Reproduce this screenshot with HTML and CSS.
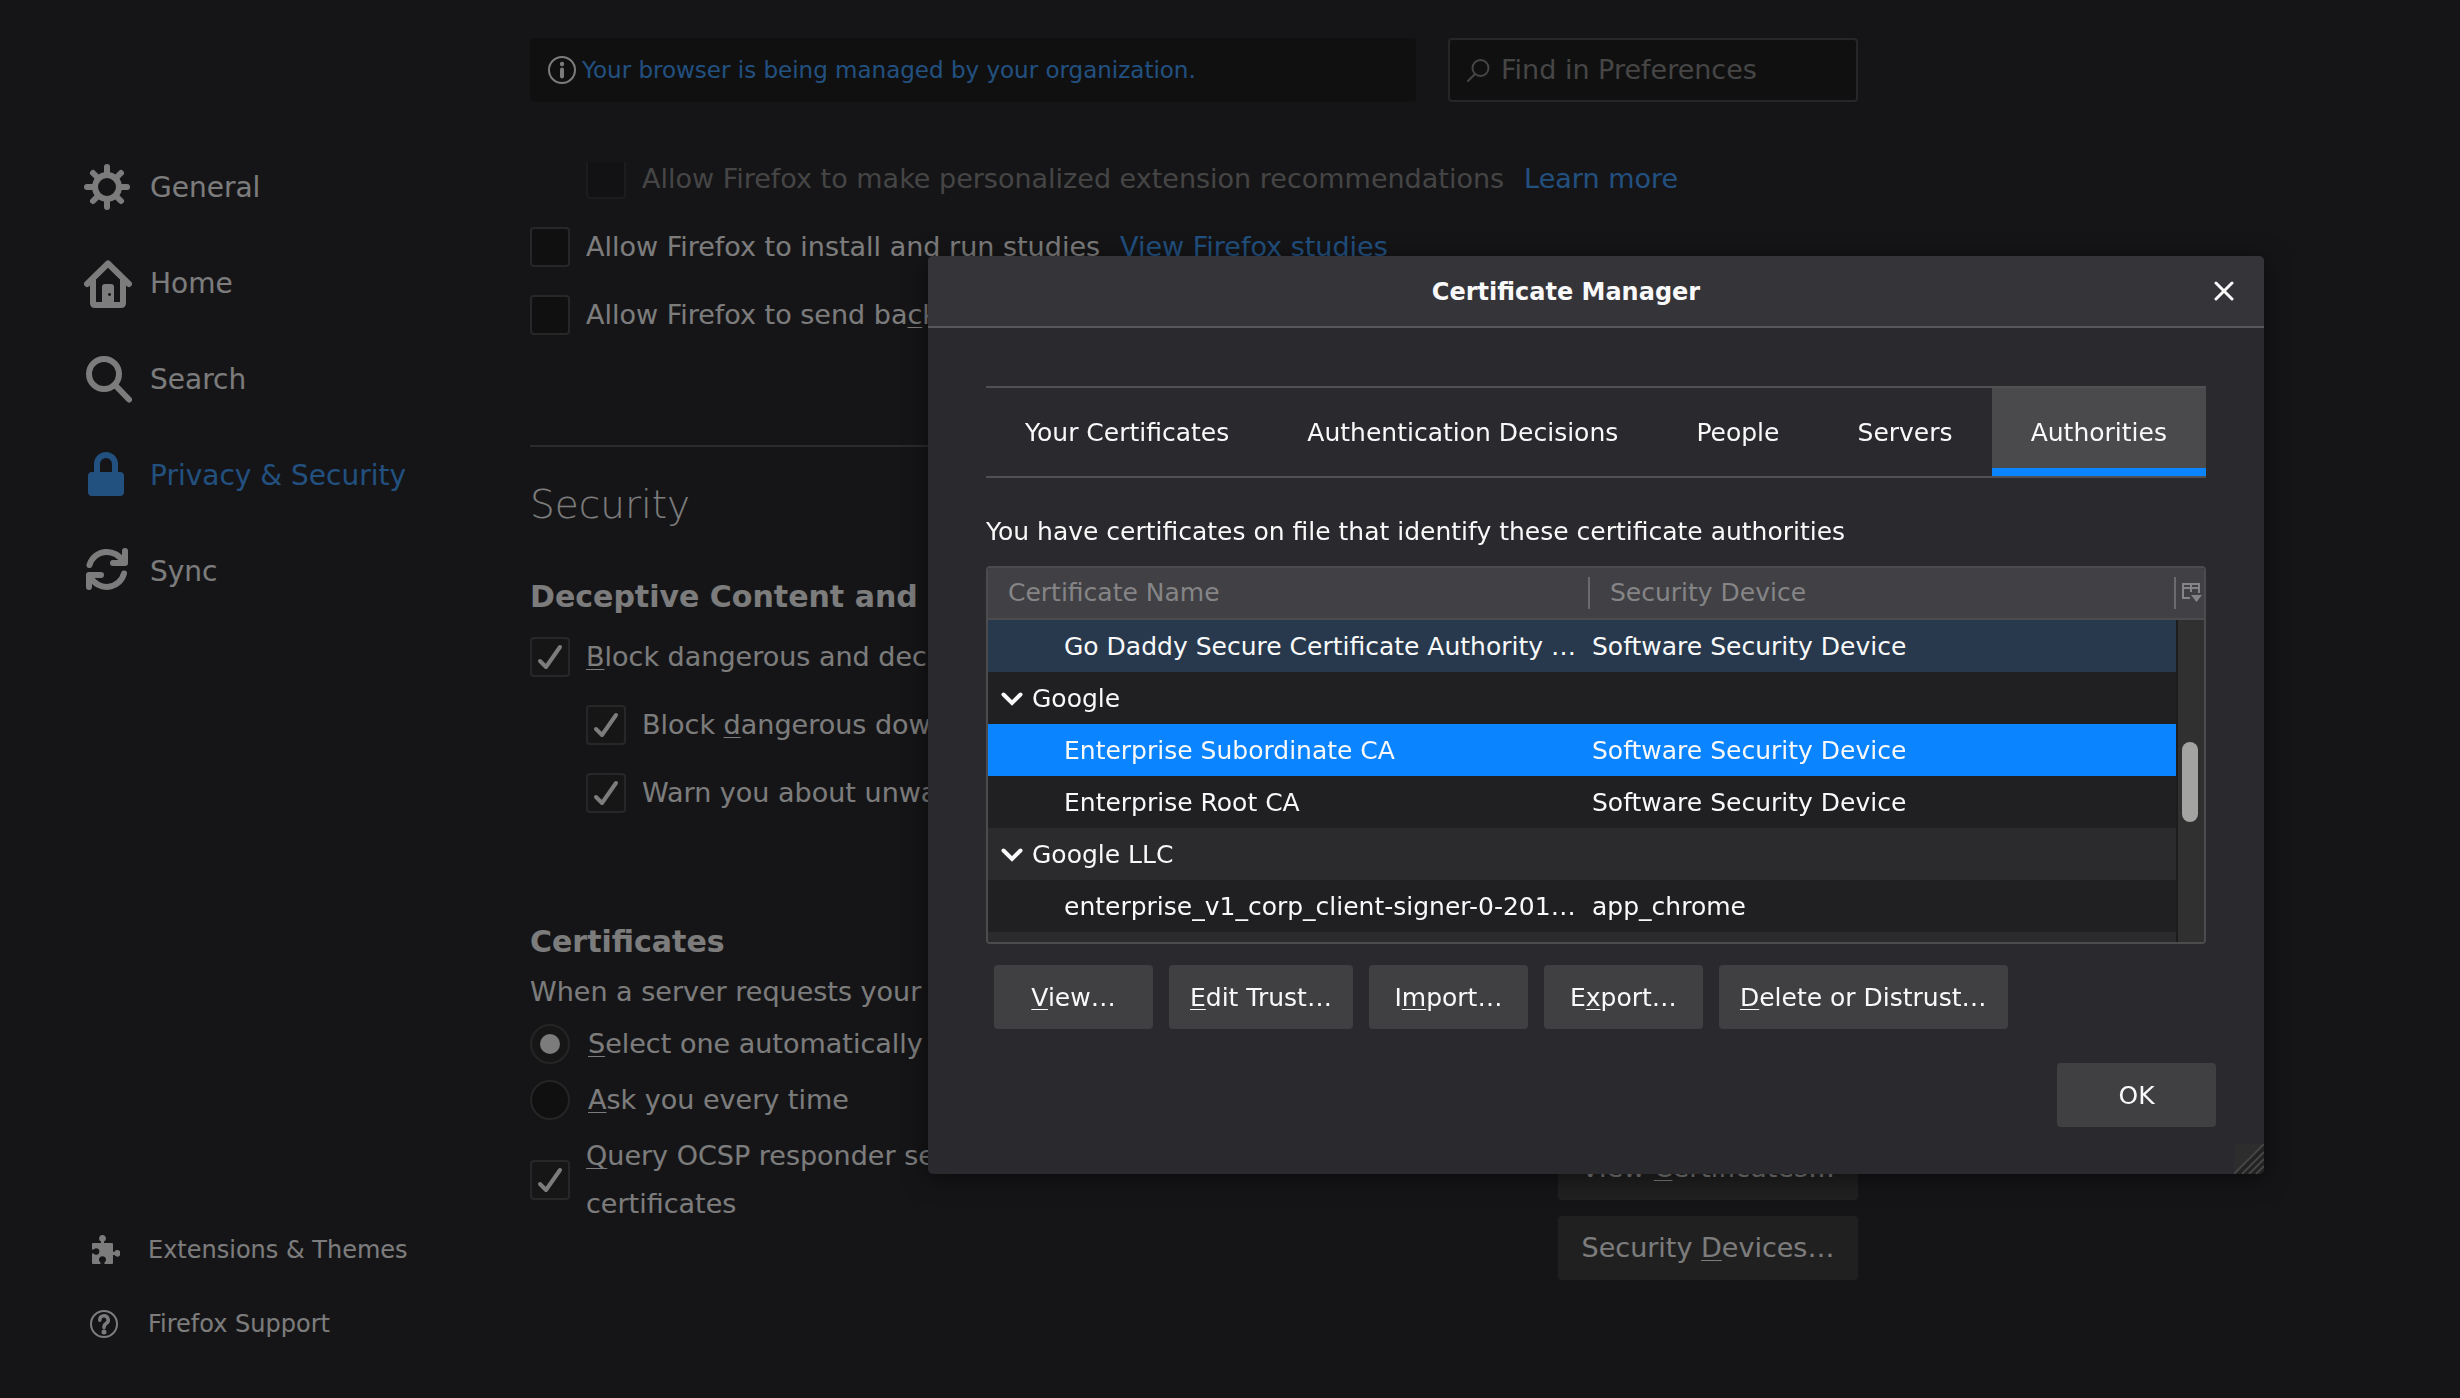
FILE: index.html
```html
<!DOCTYPE html>
<html lang="en">
<head>
<meta charset="utf-8">
<title>Preferences</title>
<link rel="stylesheet" href="styles.css">
</head>
<body>
<div class="page">
  <aside class="sidebar">
    <nav class="categories">
      <a class="category" href="#general">
        <svg class="category-icon" viewBox="0 0 48 48" fill="none" stroke="currentColor" stroke-width="6" stroke-linecap="round"><circle cx="23" cy="23" r="12"/><path d="M23 10V3M23 36v7M10 23H3M36 23h7M14 14L9 9M32 14l5-5M14 32l-5 5M32 32l5 5"/></svg>
        General</a>
      <a class="category" href="#home">
        <svg class="category-icon" viewBox="0 0 48 48" fill="none" stroke="currentColor" stroke-width="6" stroke-linecap="round" stroke-linejoin="round"><path d="M3 24L24 3.500 45 24"/><path d="M9 20v23q0 2 2 2h26q2 0 2-2V20" /><path fill="currentColor" stroke="none" fill-rule="evenodd" d="M21 24h6q3 0 3 3v18H18V27q0-3 3-3zm4.500 9a1.500 1.500 0 1 0 .01 0z"/></svg>
        Home</a>
      <a class="category" href="#search">
        <svg class="category-icon" viewBox="0 0 48 48" fill="none" stroke="currentColor" stroke-width="6" stroke-linecap="round"><circle cx="20" cy="18" r="15"/><path d="M31 29l14 14.500"/></svg>
        Search</a>
      <a class="category category-selected" href="#privacy">
        <svg class="category-icon" viewBox="0 0 48 48" fill="none" stroke="currentColor" stroke-width="6"><path d="M13 22V12a9 9 0 0 1 18 0v10"/><rect x="4" y="20" width="36" height="24" rx="4" fill="currentColor" stroke="none"/></svg>
        Privacy &amp; Security</a>
      <a class="category" href="#sync">
        <svg class="category-icon" viewBox="0 0 48 48" fill="none" stroke="currentColor" stroke-width="6" stroke-linecap="round" stroke-linejoin="round"><path d="M5.500 17A18 18 0 0 1 39 14M40 25.500A18 18 0 0 1 6.500 29M41 3v12H29M5 39V27h12"/></svg>
        Sync</a>
    </nav>
    <nav class="side-links">
      <a class="side-link" href="#addons">
        <svg class="side-icon" viewBox="-4 -2 32 32" fill="currentColor"><path d="M1 7h8V5.500a3.400 3.400 0 1 1 3 0V7h8q1 0 1 1v7.700h1.500a3.300 3.300 0 1 1 0 3.300H21v8q0 1-1 1h-7.500v-1.500a3.500 3.500 0 1 0-4 0V28H1q-1 0-1-1v-9.500h1.500a3.300 3.300 0 1 0 0-4H0V8q0-1 1-1z"/></svg>
        Extensions &amp; Themes</a>
      <a class="side-link" href="#support">
        <svg class="side-icon" viewBox="-2 -2 32 32" fill="none" stroke="currentColor" stroke-width="2"><circle cx="14" cy="14" r="13"/><path stroke-width="3.500" stroke-linecap="round" d="M9.800 10.200a4.200 4.200 0 1 1 6.400 3.300C14.500 14.600 14 15.300 14 17.500"/><circle cx="14" cy="22" r="2.500" fill="currentColor" stroke="none"/></svg>
        Firefox Support</a>
    </nav>
  </aside>

  <main class="content">
    <header class="top-bar">
      <p class="notice">
        <svg class="notice-icon" viewBox="0 0 28 28" fill="currentColor"><circle cx="14" cy="14" r="13" fill="none" stroke="currentColor" stroke-width="2"/><circle cx="14" cy="8" r="2.200"/><rect x="12" y="11.500" width="4" height="11" rx="2"/></svg>
        <a class="link" href="#policies">Your browser is being managed by your organization.</a>
      </p>
      <label class="finder">
        <svg class="finder-icon" viewBox="0 0 24 24" fill="none" stroke="currentColor" stroke-width="2" stroke-linecap="round"><circle cx="14.500" cy="10" r="8"/><path d="M9 16l-7 7"/></svg>
        <input class="finder-input" type="search" placeholder="Find in Preferences" aria-label="Find in Preferences">
      </label>
    </header>

    <div class="pane">
      <div class="option-list option-list-top">
        <div class="option option-nested option-disabled">
          <span class="tick"><input class="tick-box" type="checkbox" id="recommend" disabled></span>
          <label for="recommend">Allow Firefox to make personalized extension recommendations</label>
          <a class="link option-link" href="#learn">Learn more</a>
        </div>
        <div class="option">
          <span class="tick"><input class="tick-box" type="checkbox" id="studies"></span>
          <label for="studies">Allow Firefox to install and run studies</label>
          <a class="link option-link" href="#studies-list">View Firefox studies</a>
        </div>
        <div class="option">
          <span class="tick"><input class="tick-box" type="checkbox" id="crash"></span>
          <label for="crash">Allow Firefox to send ba<u>c</u>klogged crash reports on your behalf</label>
        </div>
      </div>

      <hr class="divider">
      <h1 class="title">Security</h1>

      <section>
        <h2 class="heading">Deceptive Content and Dangerous Software Protection</h2>
        <div class="option-list">
          <div class="option">
            <span class="tick"><input class="tick-box" type="checkbox" id="block" checked><svg class="tick-mark" viewBox="0 0 40 40"><path d="M10 24l6 6L30 10"/></svg></span>
            <label for="block"><u>B</u>lock dangerous and deceptive content</label>
          </div>
          <div class="option option-nested">
            <span class="tick"><input class="tick-box" type="checkbox" id="downloads" checked><svg class="tick-mark" viewBox="0 0 40 40"><path d="M10 24l6 6L30 10"/></svg></span>
            <label for="downloads">Block <u>d</u>angerous downloads</label>
          </div>
          <div class="option option-nested">
            <span class="tick"><input class="tick-box" type="checkbox" id="unwanted" checked><svg class="tick-mark" viewBox="0 0 40 40"><path d="M10 24l6 6L30 10"/></svg></span>
            <label for="unwanted">Warn you about unwanted and uncommon software</label>
          </div>
        </div>
      </section>

      <section class="certificates">
        <h2 class="heading">Certificates</h2>
        <p class="text">When a server requests your personal certificate</p>
        <div class="radio-list">
          <div class="option">
            <input class="radio" type="radio" name="ask" id="auto" checked>
            <label for="auto"><u>S</u>elect one automatically</label>
          </div>
          <div class="option">
            <input class="radio" type="radio" name="ask" id="ask">
            <label for="ask"><u>A</u>sk you every time</label>
          </div>
        </div>
        <div class="ocsp">
          <div class="option option-tall">
            <span class="tick"><input class="tick-box" type="checkbox" id="ocsp" checked><svg class="tick-mark" viewBox="0 0 40 40"><path d="M10 24l6 6L30 10"/></svg></span>
            <label for="ocsp"><u>Q</u>uery OCSP responder servers to confirm the current validity of certificates</label>
          </div>
          <div class="ocsp-buttons">
            <button class="button button-page" type="button">View <u>C</u>ertificates…</button>
            <button class="button button-page" type="button">Security <u>D</u>evices…</button>
          </div>
        </div>
      </section>
    </div>
  </main>
</div>

<div class="backdrop"></div>

<div class="dialog" role="dialog" aria-labelledby="dialog-title">
  <header class="dialog-head">
    <h2 class="dialog-title" id="dialog-title">Certificate Manager</h2>
    <button class="close" type="button" aria-label="Close"><svg class="close-icon" viewBox="0 0 20 20"><path d="M2 2l16 16M18 2L2 18"/></svg></button>
  </header>
  <div class="dialog-body">
    <div class="tabs" role="tablist">
      <button class="tab" type="button" role="tab">Your Certificates</button>
      <button class="tab" type="button" role="tab">Authentication Decisions</button>
      <button class="tab" type="button" role="tab">People</button>
      <button class="tab" type="button" role="tab">Servers</button>
      <button class="tab tab-selected" type="button" role="tab" aria-selected="true">Authorities</button>
    </div>
    <p class="intro">You have certificates on file that identify these certificate authorities</p>
    <div class="tree">
      <table class="tree-table">
        <colgroup><col class="col-name"><col class="col-device"><col class="col-picker"></colgroup>
        <thead>
          <tr>
            <th><span class="head-cell">Certificate Name</span></th>
            <th><span class="head-cell">Security Device</span></th>
            <th><button class="picker" type="button" aria-label="Select columns to display"><svg class="picker-icon" viewBox="0 0 20 20"><path fill="none" stroke="currentColor" stroke-width="2" d="M8 15H1V1h16v9M1 5h16M9 1v8"/><path fill="currentColor" d="M9 12h11l-5.500 7z"/></svg></button></th>
          </tr>
        </thead>
        <tbody>
          <tr class="row-current"><td class="cell-child">Go Daddy Secure Certificate Authority - G2</td><td>Software Security Device</td><td></td></tr>
          <tr><td class="cell-group"><svg class="twisty" viewBox="0 0 22 16"><path d="M2.500 3.500L11 12l8.500-8.500"/></svg>Google</td><td></td><td></td></tr>
          <tr class="row-selected"><td class="cell-child">Enterprise Subordinate CA</td><td>Software Security Device</td><td></td></tr>
          <tr><td class="cell-child">Enterprise Root CA</td><td>Software Security Device</td><td></td></tr>
          <tr class="row-alt"><td class="cell-group"><svg class="twisty" viewBox="0 0 22 16"><path d="M2.500 3.500L11 12l8.500-8.500"/></svg>Google LLC</td><td></td><td></td></tr>
          <tr><td class="cell-child">enterprise_v1_corp_client-signer-0-2018-07-03</td><td>app_chrome</td><td></td></tr>
          <tr class="row-alt"><td></td><td></td><td></td></tr>
        </tbody>
      </table>
      <div class="scrollbar"><div class="thumb"></div></div>
    </div>
    <div class="actions">
      <button class="button" type="button"><u>V</u>iew…</button>
      <button class="button" type="button"><u>E</u>dit Trust…</button>
      <button class="button" type="button">I<u>m</u>port…</button>
      <button class="button" type="button">E<u>x</u>port…</button>
      <button class="button" type="button"><u>D</u>elete or Distrust…</button>
    </div>
    <div class="confirm"><button class="button" type="button">OK</button></div>
  </div>
  <svg class="resizer" viewBox="0 0 30 30"><path fill="#2d2d2d" d="M0 0h30v30H0z"/><path fill="#222" d="M30 0v30H0z"/><path stroke="#454545" stroke-width="2" d="M0 30L30 0M8 30L30 8M15 30l15-15M22 30l8-8"/></svg>
</div>
</body>
</html>
```
FILE: styles.css
```css
* {
  box-sizing: border-box;
}

body {
  margin: 0;
  background: #2a2a2e;
  color: #f9f9fa;
  font: 27px/36px "DejaVu Sans", sans-serif;
}

h1, h2, p {
  margin: 0;
}

button, input {
  font: inherit;
  color: inherit;
}

u {
  text-decoration-thickness: 1px;
  text-underline-offset: 3px;
}

.link {
  color: #45a1ff;
  text-decoration: none;
}

.page {
  display: grid;
  grid-template-columns: 530px minmax(0, 1328px);
  height: 100vh;
  overflow: hidden;
}

/* Sidebar */

.sidebar {
  display: flex;
  flex-direction: column;
  justify-content: space-between;
  padding: 140px 0 37px 84px;
}

.category,
.side-link {
  display: flex;
  align-items: center;
  color: inherit;
  text-decoration: none;
}

.category {
  height: 96px;
  gap: 18px;
  font-size: 28px;
}

.category-selected {
  color: #45a1ff;
}

.category-icon {
  width: 48px;
  height: 48px;
}

.side-link {
  height: 74px;
  padding-left: 4px;
  gap: 28px;
  font-size: 24px;
}

.side-icon {
  width: 32px;
  height: 32px;
}

/* Top bar */

.content {
  display: flex;
  flex-direction: column;
  padding-top: 38px;
  min-height: 0;
}

.top-bar {
  display: grid;
  grid-template-columns: minmax(0, 1fr) 410px;
  gap: 32px;
  margin-bottom: 60px;
}

.notice {
  display: flex;
  align-items: center;
  gap: 6px;
  height: 64px;
  padding: 0 18px;
  border-radius: 4px;
  background: #202020;
  font-size: 23px;
}

.notice-icon {
  width: 28px;
  height: 28px;
}

.finder {
  display: flex;
  align-items: center;
  gap: 11px;
  height: 64px;
  padding: 0 16px;
  border: 2px solid #4d4d50;
  border-radius: 4px;
  background: #202020;
  color: #8c8c8c;
}

.finder-icon {
  flex: none;
  width: 24px;
  height: 24px;
}

.finder-input {
  flex: 1;
  min-width: 0;
  padding: 0;
  border: 0;
  background: none;
}

.finder-input::placeholder {
  color: inherit;
}

/* Preference pane */

.pane {
  overflow: hidden;
}

.option-list {
  display: grid;
  gap: 28px;
}

.option-list-top {
  margin-top: -3px;
}

.option {
  display: flex;
  align-items: center;
  gap: 16px;
  height: 40px;
  white-space: nowrap;
}

.option-nested {
  padding-left: 56px;
}

.option-disabled label {
  color: #8a8a8a;
}

.option-disabled .tick {
  opacity: 0.4;
}

.option-link {
  margin-left: 4px;
}

.tick {
  display: grid;
  flex: none;
  width: 40px;
  height: 40px;
}

.tick-box,
.tick-mark {
  grid-area: 1 / 1;
  width: 40px;
  height: 40px;
  margin: 0;
}

.tick-box {
  appearance: none;
  border: 2px solid #4f4f52;
  border-radius: 4px;
  background: #202020;
}

.tick-box:checked {
  background: #2d2d2f;
}

.tick-mark {
  fill: none;
  stroke: #f9f9fa;
  stroke-width: 4;
  stroke-linecap: round;
  stroke-linejoin: round;
  pointer-events: none;
}

.radio {
  appearance: none;
  display: grid;
  place-items: center;
  flex: none;
  width: 40px;
  height: 40px;
  margin: 0 2px 0 0;
  border: 2px solid #4a4a4d;
  border-radius: 50%;
  background: #202020;
}

.radio:checked {
  background: #2d2d2f;
}

.radio:checked::before {
  content: "";
  width: 20px;
  height: 20px;
  border-radius: 50%;
  background: #f9f9fa;
}

.divider {
  height: 2px;
  margin: 110px 0 33px;
  border: 0;
  background: #57575a;
}

.title {
  margin-bottom: 49px;
  font-size: 39px;
  line-height: 50px;
  font-weight: 200;
}

.heading {
  margin-bottom: 22px;
  font-size: 30px;
  line-height: 36px;
  white-space: nowrap;
}

.certificates {
  padding-top: 111px;
}

.certificates .heading,
.text {
  margin-bottom: 14px;
}

.radio-list {
  display: grid;
  gap: 16px;
  margin-bottom: 12px;
}

.ocsp {
  display: grid;
  grid-template-columns: minmax(0, 1fr) 300px;
  gap: 16px;
}

.option-tall {
  height: 96px;
  line-height: 48px;
  white-space: normal;
}

.ocsp-buttons {
  display: grid;
  gap: 16px;
  padding-top: 4px;
}

.button {
  min-width: 159px;
  height: 64px;
  padding: 2px 21px 0;
  border: 0;
  border-radius: 4px;
  background: #404042;
  white-space: nowrap;
}

.button-page {
  padding: 0;
}

/* Certificate dialog */

.backdrop {
  position: fixed;
  inset: 0;
  background: rgba(0, 0, 0, 0.5);
}

.dialog {
  position: absolute;
  top: 256px;
  left: 928px;
  width: 1336px;
  border-radius: 5px;
  background: #2a2a2e;
  box-shadow: 0 4px 24px rgba(0, 0, 0, 0.5);
  font-size: 25px;
  overflow: hidden;
}

.dialog-head {
  display: flex;
  align-items: center;
  height: 72px;
  padding-right: 20px;
  border-bottom: 2px solid #58585b;
  background: #353439;
}

.dialog-title {
  flex: 1;
  padding-top: 2px;
  font-size: 24px;
  text-align: center;
}

.close {
  display: grid;
  place-items: center;
  width: 40px;
  height: 40px;
  padding: 0;
  border: 0;
  background: none;
}

.close-icon {
  width: 20px;
  height: 20px;
  stroke: currentColor;
  stroke-width: 3;
  stroke-linecap: round;
}

.dialog-body {
  padding: 58px 58px 47px;
}

.tabs {
  display: flex;
  border: solid #505053;
  border-width: 2px 0;
}

.tab {
  flex: 1 1 auto;
  height: 88px;
  padding: 2px 0 0;
  border: 0;
  background: none;
}

.tab-selected {
  background: #4a4a4d;
  box-shadow: inset 0 -8px #0a84ff;
}

.intro {
  margin: 36px 0 16px;
}

.tree {
  position: relative;
  height: 378px;
  border: 2px solid #4c4c4e;
  border-radius: 4px;
  background: #202022;
  overflow: hidden;
}

.tree-table {
  width: 100%;
  table-layout: fixed;
  border-collapse: separate;
  border-spacing: 0;
}

.col-name {
  width: 602px;
}

.col-picker {
  width: 28px;
}

.tree-table th {
  height: 52px;
  padding: 0;
  border-bottom: 2px solid #4c4c4e;
  background: #414044;
  color: #858587;
  font-weight: normal;
  text-align: left;
}

.head-cell {
  display: block;
  padding-left: 20px;
  border-right: 2px solid #6b6b6e;
  line-height: 32px;
}

.picker {
  display: grid;
  place-items: center;
  width: 28px;
  height: 32px;
  padding: 0 0 0 4px;
  border: 0;
  background: none;
}

.picker-icon {
  width: 20px;
  height: 20px;
}

.tree-table td {
  height: 52px;
  padding: 2px 8px 0 2px;
  overflow: hidden;
  text-overflow: ellipsis;
  white-space: nowrap;
}

.row-alt {
  background: #2b2b2d;
}

.row-current {
  background: #28394e;
}

.row-selected {
  background: #0a84ff;
}

.tree-table .cell-child {
  padding-left: 76px;
}

.tree-table .cell-group {
  padding-left: 13px;
}

.twisty {
  width: 22px;
  height: 16px;
  margin-right: 9px;
  fill: none;
  stroke: currentColor;
  stroke-width: 4;
  stroke-linecap: round;
}

.scrollbar {
  position: absolute;
  top: 52px;
  right: 0;
  bottom: 0;
  width: 28px;
  padding: 122px 4px 0;
  border-left: 2px solid #1c1c1c;
  background: #303030;
}

.thumb {
  width: 16px;
  height: 80px;
  border-radius: 8px;
  background: #a3a3a1;
}

.actions {
  display: flex;
  gap: 16px;
  padding: 21px 8px 34px;
}

.confirm {
  display: flex;
  justify-content: flex-end;
  margin-right: -10px;
}

.resizer {
  position: absolute;
  right: 0;
  bottom: 0;
  width: 30px;
  height: 30px;
}
```
